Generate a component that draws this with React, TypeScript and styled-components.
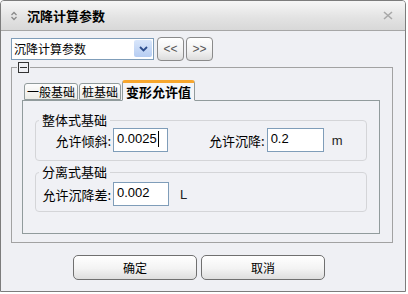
import React from 'react';
import styled, { createGlobalStyle } from 'styled-components';

const GlobalStyle = createGlobalStyle`
  html, body {
    margin: 0;
    padding: 0;
    background: #ffffff;
  }
  body {
    font-family: "Noto Sans CJK SC", "Liberation Sans", sans-serif;
    font-size: 12px;
    color: #000;
  }
`;

const Window = styled.div`
  width: 404px;
  height: 290px;
  border: 1px solid #7c7c7c;
  border-radius: 4px 4px 0 0;
  background: #eff0f4;
  display: flex;
  flex-direction: column;
  overflow: hidden;
`;

const TitleBar = styled.div`
  height: 29px;
  flex-shrink: 0;
  display: flex;
  align-items: center;
  padding: 0 12px 0 9px;
  background: linear-gradient(#f6f6f6, #e2e2e2 60%, #d8d8d8);
  border-bottom: 1px solid #a6a6a6;
`;

const Title = styled.span`
  margin-left: 9px;
  font-size: 13px;
  font-weight: bold;
  line-height: 14px;
  flex: 1;
`;

const Body = styled.div`
  padding: 6px 10px 0 9px;
  display: flex;
  flex-direction: column;
`;

const Toolbar = styled.div`
  display: flex;
  align-items: center;
  height: 23px;
  margin-left: 1px;
`;

const Combo = styled.div`
  width: 138px;
  height: 20px;
  border: 1px solid #7f9db9;
  background: #fff;
  display: flex;
  align-items: center;
  justify-content: space-between;
  padding: 0 1px 0 2px;
  box-sizing: content-box;
  margin-right: 3px;
`;

const ComboText = styled.span`
  line-height: 14px;
`;

const ComboArrow = styled.div`
  width: 18px;
  height: 17px;
  border-radius: 2px;
  background: linear-gradient(#d9e6fb, #b6cdf2);
  display: flex;
  align-items: center;
  justify-content: center;
`;

const NavButton = styled.div`
  width: 25px;
  height: 22px;
  border: 1px solid #8a8a8a;
  border-radius: 4px;
  background: linear-gradient(#ffffff, #f1f1f1 60%, #dcdcdc);
  display: flex;
  align-items: center;
  justify-content: center;
  font-family: "Liberation Sans", sans-serif;
  font-size: 12px;
  color: #555;
  margin-right: 2px;
`;

const Frame = styled.fieldset`
  margin: 1px 0 0 1px;
  width: 382px;
  box-sizing: border-box;
  min-inline-size: 0;
  border: 1px solid #a2a2a2;
  padding: 7px 12px 8px 10px;
`;

const FrameLegend = styled.legend`
  margin-left: -5px;
  padding: 0 1px;
  height: 12px;
  display: flex;
  align-items: center;
`;

const Collapse = styled.span`
  width: 9px;
  height: 9px;
  border: 1px solid #333;
  display: flex;
  align-items: center;
  justify-content: center;

  &::after {
    content: '';
    width: 7px;
    height: 1px;
    background: #333;
  }
`;

const TabRow = styled.div`
  display: flex;
  align-items: flex-end;
  height: 20px;
  padding-left: 2px;
  position: relative;
  z-index: 1;
`;

const Tab = styled.div<{ $active?: boolean }>`
  height: ${(p) => (p.$active ? '17px' : '15px')};
  padding: 0 ${(p) => (p.$active ? '3px' : '2px')};
  margin-right: 1px;
  border: 1px solid #919b9c;
  border-top: ${(p) => (p.$active ? '3px solid #f7a62d' : '1px solid #919b9c')};
  border-bottom: ${(p) => (p.$active ? '1px solid #f4f5f8' : '1px solid #919b9c')};
  border-radius: 3px 3px 0 0;
  background: ${(p) => (p.$active ? '#f4f5f8' : 'linear-gradient(#fdfdfd, #ebebe6)')};
  font-weight: ${(p) => (p.$active ? 'bold' : 'normal')};
  font-size: ${(p) => (p.$active ? '13px' : '12px')};
  line-height: 15px;
  display: flex;
  align-items: center;
  margin-bottom: ${(p) => (p.$active ? '-1px' : '0')};
`;

const Panel = styled.div`
  border: 1px solid #919b9c;
  height: 132px;
  padding: 0 12px 0 12px;
  background: #f0f1f5;
  display: flex;
  flex-direction: column;
`;

const Group = styled.fieldset<{ $top: number; $bottom: number }>`
  margin: ${(p) => p.$top}px 0 0 0;
  border: 1px solid #d4d5d8;
  border-radius: 4px;
  padding: 0 0 ${(p) => p.$bottom}px 0;
  min-inline-size: 0;
`;

const GroupLegend = styled.legend`
  margin-left: 3px;
  padding: 0 3px;
  font-size: 13px;
  line-height: 14px;
`;

const FieldRow = styled.div<{ $top: number }>`
  display: flex;
  align-items: center;
  margin-top: ${(p) => p.$top}px;
  height: 24px;
`;

const Label = styled.span<{ $width?: number; $gap?: number }>`
  width: ${(p) => (p.$width ? `${p.$width}px` : 'auto')};
  margin-left: ${(p) => p.$gap ?? 0}px;
  text-align: right;
  font-size: 13px;
  margin-right: 2px;
  white-space: nowrap;
`;

const Input = styled.div<{ $width: number }>`
  width: ${(p) => p.$width}px;
  height: 24px;
  box-sizing: border-box;
  border: 1px solid #7f9db9;
  background: #fff;
  font-family: "Liberation Sans", sans-serif;
  font-size: 13px;
  padding: 2px 0 0 3px;
  display: flex;
  align-items: flex-start;
`;

const Caret = styled.span`
  width: 1px;
  height: 16px;
  background: #000;
  margin-left: 1px;
`;

const Unit = styled.span<{ $gap: number }>`
  margin-left: ${(p) => p.$gap}px;
  font-family: "Liberation Sans", sans-serif;
  font-size: 13px;
  color: #222;
`;

const ButtonRow = styled.div`
  display: flex;
  gap: 4px;
  margin: 12px 0 0 63px;
`;

const Button = styled.div`
  width: 122px;
  height: 23px;
  border: 1px solid #707070;
  border-radius: 5px;
  background: linear-gradient(#ffffff, #f3f3f3 55%, #dedede);
  display: flex;
  align-items: center;
  justify-content: center;
  font-size: 12px;
`;

const SwapIcon = () => (
  <svg width="8" height="10" viewBox="0 0 8 10">
    <path d="M1.5 4 L4 1.5 L6.5 4 M1.5 6 L4 8.5 L6.5 6" fill="none" stroke="#8a8a8a" strokeWidth="1.3" />
  </svg>
);

const CloseIcon = () => (
  <svg width="10" height="9" viewBox="0 0 10 9">
    <path d="M1 1 L9 8 M9 1 L1 8" stroke="#a8a8a8" strokeWidth="1.6" />
  </svg>
);

const ChevronDown = () => (
  <svg width="9" height="6" viewBox="0 0 9 6">
    <path d="M1 1 L4.5 4.5 L8 1" fill="none" stroke="#2d4d8c" strokeWidth="1.8" />
  </svg>
);

export default function App() {
  return (
    <>
      <GlobalStyle />
      <Window>
        <TitleBar>
          <SwapIcon />
          <Title>沉降计算参数</Title>
          <CloseIcon />
        </TitleBar>
        <Body>
          <Toolbar>
            <Combo>
              <ComboText>沉降计算参数</ComboText>
              <ComboArrow>
                <ChevronDown />
              </ComboArrow>
            </Combo>
            <NavButton>&lt;&lt;</NavButton>
            <NavButton>&gt;&gt;</NavButton>
          </Toolbar>
          <Frame>
            <FrameLegend>
              <Collapse />
            </FrameLegend>
            <TabRow>
              <Tab>一般基础</Tab>
              <Tab>桩基础</Tab>
              <Tab $active>变形允许值</Tab>
            </TabRow>
            <Panel>
              <Group $top={12} $bottom={8}>
                <GroupLegend>整体式基础</GroupLegend>
                <FieldRow $top={1}>
                  <Label $width={75}>允许倾斜:</Label>
                  <Input $width={55}>
                    0.0025
                    <Caret />
                  </Input>
                  <Label $gap={41}>允许沉降:</Label>
                  <Input $width={57}>0.2</Input>
                  <Unit $gap={8}>m</Unit>
                </FieldRow>
              </Group>
              <Group $top={4} $bottom={5}>
                <GroupLegend>分离式基础</GroupLegend>
                <FieldRow $top={3}>
                  <Label $width={75}>允许沉降差:</Label>
                  <Input $width={56}>0.002</Input>
                  <Unit $gap={11}>L</Unit>
                </FieldRow>
              </Group>
            </Panel>
          </Frame>
          <ButtonRow>
            <Button>确定</Button>
            <Button>取消</Button>
          </ButtonRow>
        </Body>
      </Window>
    </>
  );
}
